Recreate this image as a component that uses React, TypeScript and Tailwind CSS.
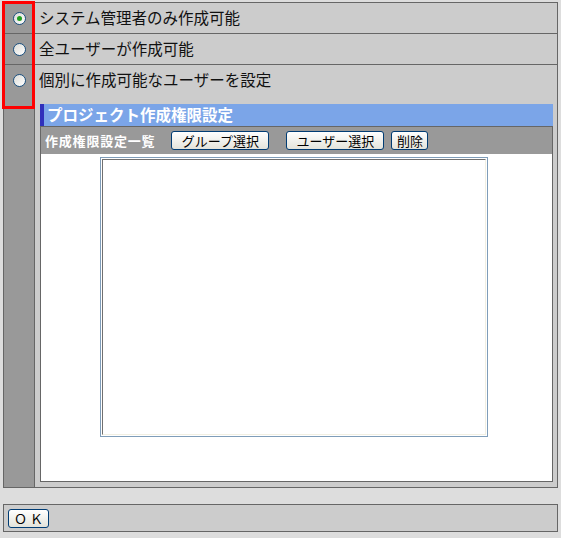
import React, { useState } from "react";

const font = { fontFamily: '"Noto Sans CJK JP", "Noto Sans", sans-serif' };

function Radio({ checked, onClick }: { checked: boolean; onClick: () => void }) {
  return (
    <button
      type="button"
      onClick={onClick}
      className="flex h-[13px] w-[13px] items-center justify-center rounded-full border border-[#1c5180] bg-gradient-to-br from-[#dcdcd7] to-white"
    >
      {checked && <span className="h-[5px] w-[5px] rounded-full bg-[#21a121]" />}
    </button>
  );
}

function XpButton({ label, className }: { label: string; className?: string }) {
  return (
    <button
      type="button"
      className={
        "flex h-[19px] items-center justify-center rounded-[3px] border border-[#003c74] bg-gradient-to-b from-white to-[#e3e3db] text-[13px] leading-none text-black " +
        (className ?? "")
      }
    >
      {label}
    </button>
  );
}

export default function App() {
  const [mode, setMode] = useState(0);

  const rows = ["システム管理者のみ作成可能", "全ユーザーが作成可能"];

  return (
    <div className="relative min-h-[538px] w-[561px] bg-[#dddddd] pt-[2px]" style={font}>
      <div className="ml-[3px] w-[555px] border border-[#666666]">
        {rows.map((label, i) => (
          <div key={i} className="flex h-[31px] border-b border-[#666666]">
            <div className="flex w-[31px] items-center justify-center border-r border-[#666666] bg-[#999999] pt-[1px]">
              <Radio checked={mode === i} onClick={() => setMode(i)} />
            </div>
            <div className="flex flex-1 items-center bg-[#cccccc] pl-[4px] text-[15.5px] text-[#111]">
              {label}
            </div>
          </div>
        ))}

        {/* individual setting row */}
        <div className="flex h-[422px]">
          <div className="flex w-[31px] justify-center border-r border-[#666666] bg-[#999999] pt-[9px]">
            <Radio checked={mode === 2} onClick={() => setMode(2)} />
          </div>
          <div className="flex flex-1 flex-col bg-[#cccccc] pl-[5px] pr-[4px]">
            <div className="-ml-[1px] flex h-[30px] items-center text-[15.5px] text-[#111]">
              個別に作成可能なユーザーを設定
            </div>
            <div className="mt-[9px] flex h-[22px] items-center border-l-4 border-[#3030bb] bg-[#7ba5e8] pl-[3px] text-[15.5px] font-bold text-white">
              プロジェクト作成権限設定
            </div>
            <div className="flex h-[356px] flex-col border border-[#666666]">
              <div className="flex h-[27px] items-center bg-[#999999] pl-[4px]">
                <span className="text-[13px] font-bold tracking-[0.8px] text-white">
                  作成権限設定一覧
                </span>
                <XpButton label="グループ選択" className="ml-[16px] w-[98px]" />
                <XpButton label="ユーザー選択" className="ml-[17px] w-[98px]" />
                <XpButton label="削除" className="ml-[7px] w-[37px]" />
              </div>
              <div className="flex-1 bg-white pl-[59px] pt-[3px]">
                <div className="h-[280px] w-[388px] border border-[#7f9db9] p-[1px]">
                  <div className="h-full w-full border-l border-t border-r border-b border-l-[#707070] border-t-[#707070] border-r-[#f1efe2] border-b-[#f1efe2]" />
                </div>
              </div>
            </div>
          </div>
        </div>
      </div>

      <div className="ml-[3px] mt-[16px] flex h-[28px] w-[555px] items-start border border-[#666666] bg-[#cccccc] pl-[4px] pt-[4px]">
        <XpButton label="Ｏ Ｋ" className="h-[18px] w-[41px] text-[12px]" />
      </div>

      <div className="pointer-events-none absolute left-[2px] top-[1px] h-[108px] w-[33px] border-[3px] border-[#ff0000]" />
    </div>
  );
}
